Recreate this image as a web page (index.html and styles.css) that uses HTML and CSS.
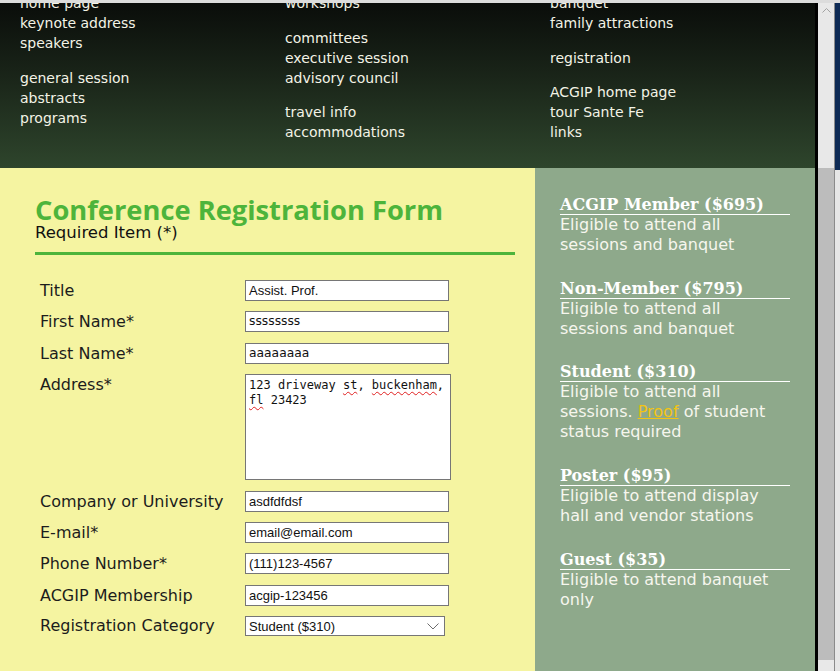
FILE: index.html
```html
<!DOCTYPE html>
<html lang="en">
<head>
<meta charset="utf-8">
<title>Conference Registration Form</title>
<link rel="stylesheet" href="styles.css">
</head>
<body>
<div class="chrome-top"></div>
<div class="window">
  <div class="page">
    <header class="site-header">
      <nav class="nav">
        <div class="nav-col">
          <ul class="nav-group">
            <li><a href="#">home page</a></li>
            <li><a href="#">keynote address</a></li>
            <li><a href="#">speakers</a></li>
          </ul>
          <ul class="nav-group">
            <li><a href="#">general session</a></li>
            <li><a href="#">abstracts</a></li>
            <li><a href="#">programs</a></li>
          </ul>
        </div>
        <div class="nav-col">
          <ul class="nav-group">
            <li><a href="#">workshops</a></li>
          </ul>
          <ul class="nav-group">
            <li><a href="#">committees</a></li>
            <li><a href="#">executive session</a></li>
            <li><a href="#">advisory council</a></li>
          </ul>
          <ul class="nav-group">
            <li><a href="#">travel info</a></li>
            <li><a href="#">accommodations</a></li>
          </ul>
        </div>
        <div class="nav-col">
          <ul class="nav-group">
            <li><a href="#">banquet</a></li>
            <li><a href="#">family attractions</a></li>
          </ul>
          <ul class="nav-group">
            <li><a href="#">registration</a></li>
          </ul>
          <ul class="nav-group">
            <li><a href="#">ACGIP home page</a></li>
            <li><a href="#">tour Sante Fe</a></li>
            <li><a href="#">links</a></li>
          </ul>
        </div>
      </nav>
    </header>

    <main class="main">
      <section class="form-area">
        <h1 class="form-title">Conference Registration Form</h1>
        <p class="required-note">Required Item (*)</p>
        <hr class="rule">
        <form class="reg-form">
          <label class="lbl">Title</label>
          <div class="field">Assist. Prof.</div>

          <label class="lbl">First Name*</label>
          <div class="field field-alt">ssssssss</div>

          <label class="lbl">Last Name*</label>
          <div class="field field-alt">aaaaaaaa</div>

          <label class="lbl">Address*</label>
          <div class="textarea">123 driveway <span class="spell">st</span>, <span class="spell">buckenham</span>,<br><span class="spell">fl</span> 23423</div>

          <label class="lbl">Company or University</label>
          <div class="field">asdfdfdsf</div>

          <label class="lbl">E-mail*</label>
          <div class="field">email@email.com</div>

          <label class="lbl">Phone Number*</label>
          <div class="field">(111)123-4567</div>

          <label class="lbl">ACGIP Membership</label>
          <div class="field">acgip-123456</div>

          <label class="lbl lbl-select">Registration Category</label>
          <div class="select">
            <span>Student ($310)</span>
            <svg class="chev" width="12" height="7" viewBox="0 0 12 7"><path d="M0.5 0.5 L6 6 L11.5 0.5" fill="none" stroke="#6d6d6d" stroke-width="1"/></svg>
          </div>
        </form>
      </section>

      <aside class="sidebar">
        <div class="plan">
          <h2 class="plan-name">ACGIP Member ($695)</h2>
          <p class="plan-desc">Eligible to attend all sessions and banquet</p>
        </div>
        <div class="plan">
          <h2 class="plan-name">Non-Member ($795)</h2>
          <p class="plan-desc">Eligible to attend all sessions and banquet</p>
        </div>
        <div class="plan">
          <h2 class="plan-name">Student ($310)</h2>
          <p class="plan-desc">Eligible to attend all sessions. <a href="#" class="proof">Proof</a> of student status required</p>
        </div>
        <div class="plan">
          <h2 class="plan-name">Poster ($95)</h2>
          <p class="plan-desc">Eligible to attend display hall and vendor stations</p>
        </div>
        <div class="plan">
          <h2 class="plan-name">Guest ($35)</h2>
          <p class="plan-desc">Eligible to attend banquet only</p>
        </div>
      </aside>
    </main>
  </div>
  <div class="edge"></div>
  <div class="scrollbar">
    <div class="sb-top">
      <svg class="sb-arrow" width="9" height="5" viewBox="0 0 9 5"><path d="M0.5 4.5 L4.5 0.5 L8.5 4.5" fill="none" stroke="#a3a3a3" stroke-width="1"/></svg>
    </div>
    <div class="sb-thumb"></div>
    <div class="sb-rest"></div>
  </div>
  <div class="sep"></div>
  <div class="other">
    <div class="other-top"></div>
    <div class="other-bottom"></div>
  </div>
</div>
</body>
</html>
```

FILE: styles.css
```css
html, body {
  margin: 0;
  padding: 0;
}
body {
  width: 840px;
  height: 671px;
  overflow: hidden;
  background: #dadada;
  font-family: "DejaVu Sans", Verdana, sans-serif;
}
.chrome-top {
  height: 3px;
  background: #dcdcdc;
}
.window {
  display: flex;
  height: 668px;
}
.page {
  width: 815px;
  height: 668px;
  overflow: hidden;
  display: flex;
  flex-direction: column;
}

/* header */
.site-header {
  height: 165px;
  flex: none;
  overflow: hidden;
  background: linear-gradient(to bottom, #0a0d0a 0%, #1a2519 45%, #2e452c 100%);
}
.nav {
  display: grid;
  grid-template-columns: 265px 265px 265px;
  padding-left: 20px;
  margin-top: -10px;
}
.nav-group {
  list-style: none;
  margin: 0 0 14.5px;
  padding: 0;
}
.nav-group li {
  line-height: 20px;
  font-size: 14px;
}
.nav-group a {
  color: #f3f3e6;
  text-decoration: none;
}

/* main */
.main {
  flex: 1;
  display: flex;
}
.form-area {
  width: 535px;
  box-sizing: border-box;
  padding: 27px 20px 0 35px;
  background: #f5f4a1;
}
.form-title {
  margin: 0;
  font-family: "Open Sans", "Noto Sans", sans-serif;
  font-weight: 700;
  font-size: 27.3px;
  line-height: 29px;
  color: #4db43b;
}
.required-note {
  margin: 0;
  font-size: 16.5px;
  line-height: 18px;
  color: #111;
}
.rule {
  margin: 10px 0 0;
  border: 0;
  height: 3px;
  background: #4db43b;
}
.reg-form {
  margin-top: 25px;
  padding-left: 5px;
  display: grid;
  grid-template-columns: 205px 1fr;
  row-gap: 10.4px;
  align-items: start;
}
.lbl {
  font-size: 16px;
  line-height: 21px;
  color: #1c1c1c;
}
.lbl-select {
  line-height: 20px;
}
.field {
  width: 204px;
  height: 21px;
  box-sizing: border-box;
  border: 1px solid #767676;
  background: #fff;
  padding: 0 3px;
  font-family: "Liberation Sans", Arial, sans-serif;
  font-size: 13px;
  line-height: 19px;
  color: #111;
  white-space: nowrap;
  overflow: hidden;
}
.field-alt {
  font-family: "DejaVu Sans", Verdana, sans-serif;
  font-size: 12.3px;
}
.textarea {
  width: 206px;
  height: 106px;
  box-sizing: border-box;
  border: 1px solid #767676;
  background: #fff;
  padding: 3px 3px;
  font-family: "DejaVu Sans Mono", "Liberation Mono", monospace;
  font-size: 12px;
  line-height: 15px;
  color: #111;
  white-space: nowrap;
}
.spell {
  text-decoration: underline wavy #e02020;
  text-decoration-thickness: 1px;
  text-decoration-skip-ink: none;
  text-underline-offset: 2px;
}
.select {
  width: 200px;
  height: 20px;
  box-sizing: border-box;
  border: 1px solid #767676;
  background: #fff;
  padding: 0 3px 0 3px;
  display: flex;
  align-items: center;
  justify-content: space-between;
  font-family: "Liberation Sans", Arial, sans-serif;
  font-size: 13px;
  color: #111;
}
.chev {
  margin-right: 2px;
}

/* sidebar */
.sidebar {
  flex: 1;
  box-sizing: border-box;
  padding: 28px 25px 0 25px;
  background: #8ea98b;
}
.plan {
  width: 230px;
  margin-bottom: 24.7px;
}
.plan-name {
  margin: 0;
  font-family: "DejaVu Serif", Georgia, serif;
  font-weight: 700;
  font-size: 16px;
  line-height: 18px;
  color: #fff;
  border-bottom: 1px solid #fff;
}
.plan-desc {
  margin: 0;
  font-size: 16px;
  line-height: 20px;
  color: #f6f6ee;
}
.proof {
  color: #f2c414;
  text-decoration: underline;
}

/* window chrome */
.edge {
  width: 3px;
  background: #000;
}
.scrollbar {
  width: 16px;
  display: flex;
  flex-direction: column;
  background: #e8e8e8;
}
.sb-top {
  height: 165px;
  display: flex;
  justify-content: center;
  padding-top: 5px;
  box-sizing: border-box;
}
.sb-thumb {
  height: 492px;
  background: #bcbcbc;
}
.sb-rest {
  flex: 1;
}
.sep {
  width: 1px;
  background: #8a8a8a;
}
.other {
  width: 5px;
  display: flex;
  flex-direction: column;
}
.other-top {
  height: 167px;
  background: #0d2a55;
}
.other-bottom {
  flex: 1;
  background: #e6e6e6;
}
```
